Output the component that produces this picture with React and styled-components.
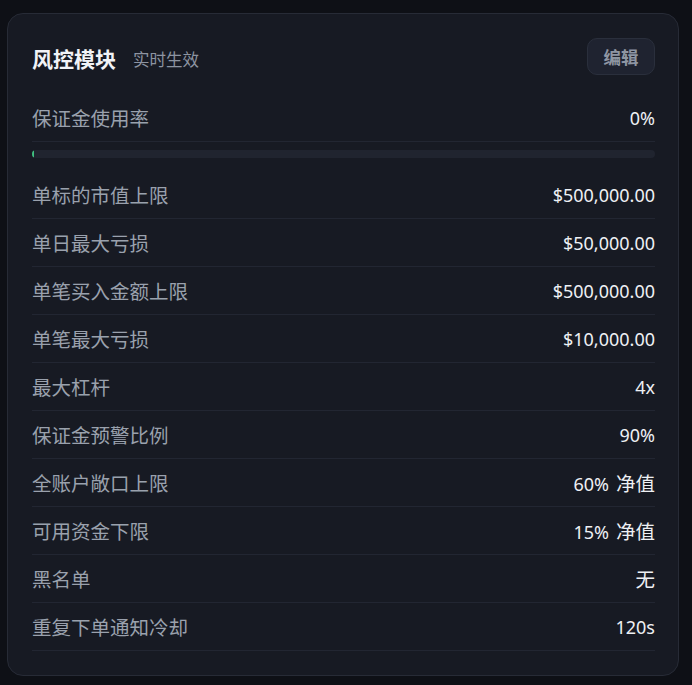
import React from "react";
import styled, { createGlobalStyle } from "styled-components";

const GlobalStyle = createGlobalStyle`
  html, body {
    margin: 0;
    background: #0e1016;
  }
  body {
    font-family: "Noto Sans", "Noto Sans CJK SC", sans-serif;
  }
`;

const Page = styled.div`
  padding: 13px 13px 10px 7px;
`;

const Card = styled.section`
  background: #171a23;
  border: 1px solid #272b36;
  border-radius: 16px;
  padding: 24px 23px 24px 24px;
`;

const Header = styled.header`
  display: flex;
  align-items: center;
  height: 36px;
  margin-bottom: 20px;
`;

const Title = styled.h2`
  margin: 0;
  margin-top: 3px;
  font-size: 21px;
  font-weight: 700;
  color: #f1f3f7;
  font-family: "Noto Sans CJK SC", sans-serif;
`;

const Subtitle = styled.span`
  margin-left: 17px;
  margin-top: 5px;
  font-size: 16.5px;
  color: #8d94a1;
  font-family: "Noto Sans CJK SC", sans-serif;
`;

const EditButton = styled.button`
  margin-left: auto;
  width: 68px;
  height: 37px;
  border-radius: 10px;
  background: #1f2330;
  border: 1px solid #2a2f3c;
  color: #8f96a3;
  font-size: 17.5px;
  font-weight: 700;
  font-family: "Noto Sans CJK SC", sans-serif;
  padding: 0;
  cursor: pointer;
`;

const Row = styled.div`
  display: flex;
  align-items: center;
  justify-content: space-between;
  height: 47px;
  border-bottom: 1px solid #222632;
`;

const Label = styled.span`
  font-size: 19.5px;
  color: #9aa1ad;
  font-family: "Noto Sans CJK SC", sans-serif;
`;

const Value = styled.span`
  display: flex;
  align-items: baseline;
  gap: 7px;
  font-size: 18px;
  color: #eef0f4;
`;

const Unit = styled.span`
  font-size: 19.5px;
  font-family: "Noto Sans CJK SC", sans-serif;
`;

const Track = styled.div`
  height: 8px;
  margin: 8px 0 13px;
  border-radius: 4px;
  background: #20242f;
  overflow: hidden;
`;

const Fill = styled.div`
  height: 100%;
  min-width: 2px;
  background: #3fbf7f;
  border-radius: 4px;
`;

const limits = [
  { label: "单标的市值上限", value: "$500,000.00" },
  { label: "单日最大亏损", value: "$50,000.00" },
  { label: "单笔买入金额上限", value: "$500,000.00" },
  { label: "单笔最大亏损", value: "$10,000.00" },
  { label: "最大杠杆", value: "4x" },
  { label: "保证金预警比例", value: "90%" },
  { label: "全账户敞口上限", value: "60%", unit: "净值" },
  { label: "可用资金下限", value: "15%", unit: "净值" },
  { label: "黑名单", unit: "无" },
  { label: "重复下单通知冷却", value: "120s" },
];

export default function App() {
  const marginUsage = 0;
  return (
    <>
      <GlobalStyle />
      <Page>
        <Card>
          <Header>
            <Title>风控模块</Title>
            <Subtitle>实时生效</Subtitle>
            <EditButton>编辑</EditButton>
          </Header>
          <Row>
            <Label>保证金使用率</Label>
            <Value>{marginUsage}%</Value>
          </Row>
          <Track>
            <Fill style={{ width: `${marginUsage}%` }} />
          </Track>
          {limits.map(({ label, value, unit }) => (
            <Row key={label}>
              <Label>{label}</Label>
              <Value>
                {value && <span>{value}</span>}
                {unit && <Unit>{unit}</Unit>}
              </Value>
            </Row>
          ))}
        </Card>
      </Page>
    </>
  );
}
